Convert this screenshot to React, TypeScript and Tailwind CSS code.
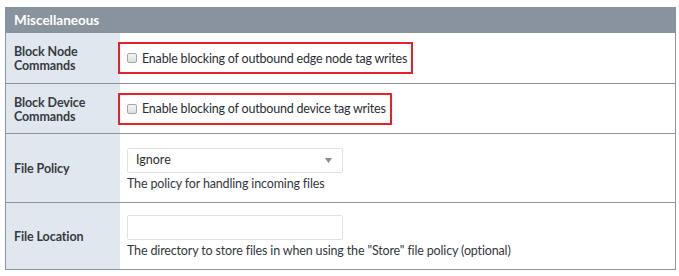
import React from "react";

function CheckRow({ text, width }: { text: string; width: string }) {
  return (
    <div className={`-ml-[9px] h-[32px] border-2 border-[#e3222c] flex items-center pl-[7px] ${width}`}>
      <span className="w-[10px] h-[10px] rounded-[2px] border border-[#a3a8ad] bg-gradient-to-b from-[#f4f4f4] to-[#dedede] shrink-0" />
      <span className="ml-[5px] pt-[1px] text-[12.5px] tracking-[-0.2px] whitespace-nowrap text-[#2a2e33] leading-[16px]">{text}</span>
    </div>
  );
}

export default function App() {
  const label = "bg-[#e1e7ee] border-l border-b border-[#8a949e] pl-[8px] pt-[2px] flex items-center font-bold text-[12.5px] tracking-[-0.1px] leading-[14px] text-[#363b41]";
  const value = "border-b border-r border-[#8a949e] pl-[7px] flex";
  const help = "mt-[3px] text-[12.5px] tracking-[-0.15px] leading-[16px] text-[#33383e] whitespace-nowrap";
  return (
    <div className="pt-[7px] pl-[5px] w-[676px] font-['Lato',sans-serif] bg-white">
      <div className="h-[26px] bg-[#89939d] text-white font-bold text-[13.5px] pl-[9px] pt-[1px] flex items-center">
        Miscellaneous
      </div>
      <div className="grid grid-cols-[115px_1fr]">
        <div className={`${label} h-[51px]`}>
          <div>Block Node<br />Commands</div>
        </div>
        <div className={`${value} h-[51px] items-center`}>
          <CheckRow text="Enable blocking of outbound edge node tag writes" width="w-[295px]" />
        </div>

        <div className={`${label} h-[50px]`}>
          <div>Block Device<br />Commands</div>
        </div>
        <div className={`${value} h-[50px] items-center`}>
          <CheckRow text="Enable blocking of outbound device tag writes" width="w-[274px]" />
        </div>

        <div className={`${label} h-[69px]`}>
          <div>File Policy</div>
        </div>
        <div className={`${value} h-[69px] flex-col pt-[14px]`}>
          <div className="w-[216px] h-[25px] border border-[#dde3e8] rounded-[2px] bg-white flex items-center pl-[8px] pr-[10px] text-[12.5px] text-[#2a2e33]">
            <span className="flex-1">Ignore</span>
            <svg width="7" height="5" viewBox="0 0 7 5">
              <path d="M0 0 L7 0 L3.5 5 Z" fill="#8c8c8c" />
            </svg>
          </div>
          <div className={help}>The policy for handling incoming files</div>
        </div>

        <div className={`${label} h-[67px]`}>
          <div>File Location</div>
        </div>
        <div className={`${value} h-[67px] flex-col pt-[12px]`}>
          <div className="w-[216px] h-[25px] border border-[#dde3e8] rounded-[2px] bg-white" />
          <div className={help}>
            The directory to store files in when using the "Store" file policy (optional)
          </div>
        </div>
      </div>
    </div>
  );
}
